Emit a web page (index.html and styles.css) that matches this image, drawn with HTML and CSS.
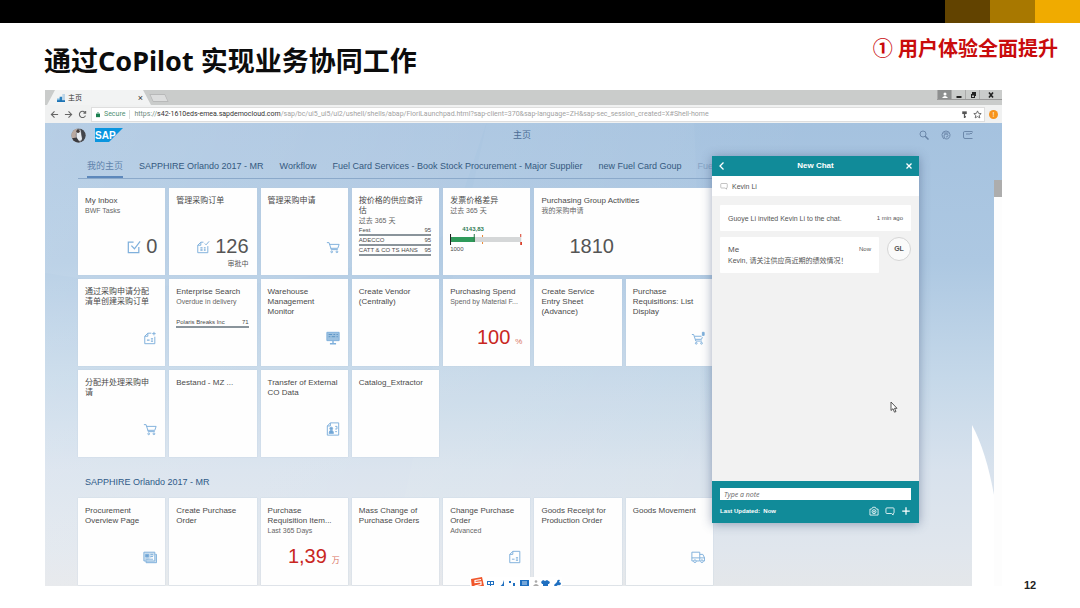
FILE: index.html
```html
<!DOCTYPE html>
<html lang="zh-CN">
<head>
<meta charset="utf-8">
<title>通过CoPilot 实现业务协同工作</title>
<link rel="stylesheet" href="styles.css">
</head>
<body>
<svg class="defs" aria-hidden="true">
  <symbol id="cart" viewBox="0 0 16 16"><path d="M1 3h2.500l2.500 8h7.500M4 5h11l-1.500 4.500H5.500"/><circle cx="6.500" cy="13.500" r="1"/><circle cx="12.500" cy="13.500" r="1"/></symbol>
  <symbol id="doc" viewBox="0 0 16 16"><path d="M5.500 2.500h3M5.500 2.500L2 6v8.500h11.500V7M5.500 2.500V6H2M10 4l1.500 1.500L15 1.500"/><path d="M5 9h2.500M5 11.500h2.500M9 9h2M9 11.500h2" stroke-width="1.600"/></symbol>
  <symbol id="docplus" viewBox="0 0 16 16"><path d="M5.500 2.500h4M5.500 2.500L2 6v8.500h11.500V6.500M5.500 2.500V6H2M12.500 1v4M10.500 3h4"/><path d="M4.500 10.500h3M9 9h2.500M9 11.500h2.500" stroke-width="1.500"/></symbol>
  <symbol id="docsum" viewBox="0 0 16 16"><path d="M5.500 1.500h8v13H2V5zM5.500 1.500V5H2M4.500 10.500h3"/><path d="M9 9h2.500M9 11.500h2.500" stroke-width="1.500"/></symbol>
  <symbol id="bubble" viewBox="0 0 16 16"><path d="M3 3h10q1.500 0 1.500 1.500v6q0 1.500-1.500 1.500v2.500L10.500 12H3q-1.500 0-1.500-1.500v-6Q1.500 3 3 3z"/></symbol>
</svg>

<div class="slide">
  <div class="brandbar"><i class="b1"></i><i class="b2"></i><i class="b3"></i></div>
  <header class="heading">
    <h1>通过CoPilot 实现业务协同工作</h1>
    <p>① 用户体验全面提升</p>
  </header>

  <div class="stage">
    <main class="browser">
      <div class="tabstrip">
        <div class="tab">
          <svg class="favicon" viewBox="0 0 9 9"><path d="M0 5h4v4H0z" fill="#78b7e0"/><path d="M3 3h3v6H3z" fill="#2b7fbd"/><path d="M6 0h3v9H6z" fill="#bcd5e8"/><path d="M0 7h9v2H0z" fill="#1c73b5"/></svg>
          <span>主页</span>
          <button aria-label="关闭标签页">×</button>
        </div>
        <button class="newtab" aria-label="新标签页"></button>
        <div class="winbtns">
          <button class="user" aria-label="用户"><svg viewBox="0 0 10 8"><circle cx="5" cy="3" r="1.500" fill="#fff"/><path d="M2 7q3-4 6 0z" fill="#fff"/></svg></button>
          <button aria-label="最小化"><svg viewBox="0 0 10 8"><path d="M2.500 5h5v2h-5z"/></svg></button>
          <button aria-label="还原"><svg viewBox="0 0 10 8"><path d="M4 1h4v4H7v2H3V3h1z"/><path d="M4 4.500h2v1.500H4z" fill="#ccc"/></svg></button>
          <button class="wide" aria-label="关闭"><svg viewBox="0 0 10 8"><path d="M3 1.500l4 5M7 1.500l-4 5" stroke="#222" stroke-width="1.600"/></svg></button>
        </div>
      </div>
      <div class="toolbar">
        <button aria-label="后退"><svg viewBox="0 0 10 10"><path d="M9 5H2M5 1.500L1.500 5 5 8.500"/></svg></button>
        <button aria-label="前进"><svg viewBox="0 0 10 10"><path d="M1 5h7M5 1.500L8.500 5 5 8.500"/></svg></button>
        <button aria-label="刷新"><svg viewBox="0 0 10 10"><path d="M8.300 6.200a3.500 3.500 0 1 1-.6-3.600M8.500 1v2.500H6"/></svg></button>
        <div class="address">
          <svg class="lock" viewBox="0 0 6 8"><path d="M0 3h6v5H0z" fill="#1b8050"/><path d="M1.500 3.500V2q1.500-2 3 0v1.500" fill="none" stroke="#1b8050"/></svg>
          <span class="secure">Secure</span>
          <span class="url"><span class="scheme">https://</span><b>s42-1610eds-emea.sapdemocloud.com</b>/sap/bc/ui5_ui5/ui2/ushell/shells/abap/FioriLaunchpad.html?sap-client=370&amp;sap-language=ZH&amp;sap-sec_session_created=X#Shell-home</span>
          <svg class="aicon" viewBox="0 0 10 10"><path d="M2.500 1.500h5v3h-5z" fill="#555"/><path d="M5 4v5M5 7.500h1.500" stroke="#555" stroke-width="1.400"/></svg>
          <svg class="aicon" viewBox="0 0 10 10"><path d="M5 1l1.200 2.700 2.900.3-2.200 1.900.7 2.900L5 7.300 2.400 8.800l.7-2.900L.9 4l2.900-.3z" fill="none" stroke="#555" stroke-width=".9"/></svg>
        </div>
        <span class="ext">!</span>
      </div>

      <div class="launchpad">
        <svg class="rays" viewBox="0 0 958 463" preserveAspectRatio="none" aria-hidden="true"><path d="M0 0H442L405 110Q230 190 0 150z" fill="#fff" opacity=".05"/><path d="M442 0H650L668 463H340z" fill="#fff" opacity=".04"/></svg>
        <div class="shellbar">
          <div class="brand">
            <svg class="avatar" viewBox="0 0 16 16"><defs><clipPath id="av"><circle cx="8" cy="8" r="7.500"/></clipPath></defs><g clip-path="url(#av)"><path d="M0 0h16v16H0z" fill="#77777b"/><path d="M0 0h7L5 7l1 9H0z" fill="#b9a9a1"/><path d="M6 3l4-1 1 6 1 5-6 1z" fill="#e6eaf0"/><path d="M10 0h6v16h-6l2-5-1-6z" fill="#43464c"/><path d="M1 11l5-1 4 6H2z" fill="#3b3b40"/><circle cx="7.500" cy="3.500" r="1.800" fill="#463c39"/></g></svg>
            <svg class="sap" viewBox="0 0 28 14"><path d="M0 0h28L14 14H0z" fill="#0a95df"/><text x="0" y="11" font-size="10" font-weight="700" fill="#fff">SAP</text></svg>
          </div>
          <h2>主页</h2>
          <div class="actions">
            <button aria-label="搜索"><svg viewBox="0 0 10 10"><circle cx="4" cy="4" r="3"/><path d="M6.200 6.200L9.500 9.500" stroke-width="1.500"/></svg></button>
            <button aria-label="CoPilot"><svg viewBox="0 0 10 10"><path d="M3 9Q1 7 1 4.500 1.500 1 5 1q3.500 0 4 3.500Q9 9 5 9q-2 0-2-3 0-2 2-2t2 1.500T5 7M2.500 3h5"/></svg></button>
            <button aria-label="通知"><svg viewBox="0 0 10 10"><path d="M9.500 1.500H1.500Q.500 1.500.500 3v4q0 1.500 1.500 1.500h7.500M3 4h4M7 3l1 1 1.500-1.500"/></svg></button>
          </div>
        </div>

        <div class="page">
          <nav class="anchors">
            <a class="current" href="#home">我的主页</a><a href="#sapphire">SAPPHIRE Orlando 2017 - MR</a><a href="#g3">Workflow</a><a href="#g4">Fuel Card Services - Book Stock Procurement - Major Supplier</a><a href="#g5">new Fuel Card Goup</a><a class="faded" href="#g6">Fue</a>
          </nav>

          <section class="tiles" id="home">
            <a class="tile" href="#t"><h3>My Inbox</h3><p>BWF Tasks</p><div class="value"><svg class="icon" viewBox="0 0 16 16"><path d="M13.500 8v6.500H1.500V2.500h6M5 6.500L8.500 10 15 1.500" stroke-width="1.400"/></svg><b>0</b></div></a>
            <a class="tile" href="#t"><h3>管理采购订单</h3><div class="value"><svg class="icon"><use href="#doc"/></svg><b>126</b></div><small>审批中</small></a>
            <a class="tile" href="#t"><h3>管理采购申请</h3><div class="value"><svg class="icon"><use href="#cart"/></svg></div></a>
            <a class="tile" href="#t"><h3>按价格的供应商评估</h3><p>过去 365 天</p>
              <ul class="bars"><li><span>Fest</span><span>95</span></li><li><span>ADECCO</span><span>95</span></li><li><span>CATT &amp; CO TS HANS</span><span>95</span></li></ul></a>
            <a class="tile" href="#t"><h3>发票价格差异</h3><p>过去 365 天</p>
              <div class="bullet"><span class="actual">4143,83</span><svg viewBox="0 0 70 13" preserveAspectRatio="none"><path d="M1 4h68v5H1z" fill="#d5d7d8"/><path d="M1 4h23v5H1z" fill="#2f9a5a"/><path d="M23 1h1v8h-1z" fill="#2f7a4a"/><path d="M0 1h1v11H0z" fill="#222"/><path d="M31 2h1v2h-1zM31 9h1v2h-1z" fill="#e98b3a"/><path d="M68 1h1v3h-1zM68 9h2v3h-2z" fill="#d9402b"/></svg><span>1000</span></div></a>
            <a class="tile double" href="#t"><h3>Purchasing Group Activities</h3><p>我的采购申请</p><div class="value"><b>1810</b></div></a>

            <a class="tile" href="#t"><h3>通过采购申请分配清单创建采购订单</h3><div class="value"><svg class="icon"><use href="#docplus"/></svg></div></a>
            <a class="tile" href="#t"><h3>Enterprise Search</h3><p>Overdue in delivery</p><ul class="bars single"><li><span>Polaris Breaks Inc</span><span>71</span></li></ul></a>
            <a class="tile" href="#t"><h3>Warehouse Management Monitor</h3><div class="value"><svg class="icon" viewBox="0 0 16 16"><path d="M1 1.500h14v9.500H1z" fill="#9dc1e0"/><path d="M3 4h4M8.500 4h2M12 4h1.500M3 6.500h2M6.500 6.500h4M12 6.500h1.500" stroke="#5c94c4"/><path d="M8 11v3.500M4.500 14.500h7" stroke-width="1.600"/></svg></div></a>
            <a class="tile" href="#t"><h3>Create Vendor (Centrally)</h3></a>
            <a class="tile" href="#t"><h3>Purchasing Spend</h3><p>Spend by Material F...</p><div class="value bad"><b>100</b><i>%</i></div></a>
            <a class="tile" href="#t"><h3>Create Service Entry Sheet (Advance)</h3></a>
            <a class="tile" href="#t"><h3>Purchase Requisitions: List Display</h3><div class="value"><svg class="icon" viewBox="0 0 16 16"><path d="M1 4h2l2.500 7.500h7M4 6h8M13 7l-1 2.500H5"/><circle cx="6" cy="14" r="1"/><circle cx="12" cy="14" r="1"/><path d="M13 1.500h2v3.500h-2z" fill="#7fb0dc"/></svg></div></a>

            <a class="tile" href="#t"><h3>分配并处理采购申请</h3><div class="value"><svg class="icon"><use href="#cart"/></svg></div></a>
            <a class="tile" href="#t"><h3>Bestand - MZ ...</h3></a>
            <a class="tile" href="#t"><h3>Transfer of External CO Data</h3><div class="value"><svg class="icon" viewBox="0 0 16 16"><path d="M5 1h9.500v14H1.500V4.500zM5 1v3.500H1.500M10.500 5h2v3h-2M10.500 11h2"/><circle cx="6" cy="7.500" r="1.600" fill="#6fa4d4"/><path d="M3.500 13q0-3.500 2.500-3.500T8.500 13z" fill="#6fa4d4"/></svg></div></a>
            <a class="tile" href="#t"><h3>Catalog_Extractor</h3></a>
          </section>

          <h2 class="group">SAPPHIRE Orlando 2017 - MR</h2>
          <section class="tiles" id="sapphire">
            <a class="tile" href="#t"><h3>Procurement Overview Page</h3><div class="value"><svg class="icon" viewBox="0 0 16 16"><path d="M3.500 12.500V14.500h12V5H14M1 2.500h12.500v10H1z" fill="#cfe1f0"/><path d="M3 5h3.500v3H3z" fill="#6fa4d4"/><path d="M8.500 5h3M8.500 7.500h3M3 10.500h8.500"/></svg></div></a>
            <a class="tile" href="#t"><h3>Create Purchase Order</h3></a>
            <a class="tile" href="#t"><h3>Purchase Requisition Item...</h3><p>Last 365 Days</p><div class="value bad"><b>1,39</b><i>万</i></div></a>
            <a class="tile" href="#t"><h3>Mass Change of Purchase Orders</h3></a>
            <a class="tile" href="#t"><h3>Change Purchase Order</h3><p>Advanced</p><div class="value"><svg class="icon"><use href="#docsum"/></svg></div></a>
            <a class="tile" href="#t"><h3>Goods Receipt for Production Order</h3></a>
            <a class="tile" href="#t"><h3>Goods Movement</h3><div class="value"><svg class="icon" viewBox="0 0 16 16"><path d="M3 12.500H1V2.500h9v10H6M10 5h3.500l2 4v3.500H14M10 9h5.500M1 9h9"/><circle cx="4.500" cy="12.800" r="1.500"/><circle cx="12.500" cy="12.800" r="1.500"/></svg></div></a>
          </section>
        </div>

        <div class="scrollbar"><i></i></div>
        <svg class="curve" viewBox="0 0 22 161" preserveAspectRatio="none" aria-hidden="true"><path d="M0 0Q14 26 22 70V161H0z" fill="#fff"/></svg>

        <div class="ime">
          <svg viewBox="0 0 92 10"><path d="M1 2L12 0l2 9-12 2z" fill="#f0562b"/><path d="M11 2.500L5 3.500v2l6-.5v2.500L4.500 9" fill="none" stroke="#fff" stroke-width="1.200"/><g fill="#1f6fc0"><path d="M17 4h7v4h-3v2h-1V8h-3zm1 1v2h2V5zm3 0v2h2V5z" fill-rule="evenodd"/><path d="M34 3v7h-6q5-1 6-7z"/><path d="M39 4h2v2h-2zM43 6h2v3h-2z"/><path d="M50 3h9v6h-9z"/><path d="M73 3l2 1 2-1 3 2-1 2h-1v3h-5V7h-1l-1-2z"/><path d="M84 8l3-3q0-3 3-2l-1 2 2 1q0 3-3 2l-3 2z"/></g><path d="M52 5h5M52 7h5" stroke="#cfe0f0"/><circle cx="66" cy="4.500" r="1.300" fill="#aaa"/><path d="M63 9q3-4 6 0z" fill="#aaa"/></svg>
        </div>

        <aside class="chat">
          <header><button aria-label="返回"><svg viewBox="0 0 8 8"><path d="M5.500.500L2 4l3.500 3.500"/></svg></button><h2>New Chat</h2><button aria-label="关闭"><svg viewBox="0 0 8 8"><path d="M1.500 1.500l5 5M6.500 1.500l-5 5"/></svg></button></header>
          <div class="who"><svg><use href="#bubble"/></svg>Kevin Li</div>
          <div class="log">
            <div class="msg"><span>Guoye Li invited Kevin Li to the chat.</span><time>1 min ago</time></div>
            <div class="own">
              <div class="msg stack"><div class="top"><strong>Me</strong><time>Now</time></div><p>Kevin, 请关注供应商近期的绩效情况！</p></div>
              <span class="badge">GL</span>
            </div>
          </div>
          <footer>
            <input type="text" placeholder="Type a note" aria-label="Type a note">
            <div class="status"><span>Last Updated:&nbsp; Now</span>
              <button aria-label="截图"><svg viewBox="0 0 16 16"><path d="M1.500 5h2.500l2-3h4l2 3h2.500v9.500h-13z"/><circle cx="8" cy="9" r="3.200"/><circle cx="8" cy="9" r="1"/></svg></button>
              <button aria-label="消息"><svg><use href="#bubble"/></svg></button>
              <button aria-label="添加"><svg viewBox="0 0 16 16"><path d="M8 2v12M2 8h12" stroke-width="2"/></svg></button>
            </div>
          </footer>
        </aside>
        <svg class="cursor" viewBox="0 0 8 12" aria-hidden="true"><path d="M1 1v8.500l2-1.800 1.500 3.500 1.500-.7-1.500-3.200H7z" fill="#fff" stroke="#444" stroke-width=".9"/></svg>
      </div>
    </main>
    <div class="pageno">12</div>
  </div>
</div>
</body>
</html>
```
FILE: styles.css
```css
* { box-sizing: border-box; margin: 0; padding: 0; }
body { background: #fff; font-family: "Liberation Sans", "Noto Sans CJK SC", sans-serif; }
button { border: 0; background: none; font: inherit; color: inherit; display: flex; align-items: center; justify-content: center; }
a { color: inherit; text-decoration: none; }
ul { list-style: none; }
svg { display: block; flex: none; }
.defs { position: absolute; width: 0; height: 0; }

.slide { min-height: 100vh; display: flex; flex-direction: column; }
.brandbar { height: 23px; background: #000; display: flex; justify-content: flex-end; }
.brandbar i { width: 45px; }
.b1 { background: #624300; }
.b2 { background: #a87800; }
.b3 { background: #f0ab00; }
.heading { height: 67px; padding: 0 22px 0 44px; display: flex; justify-content: space-between; font-family: "Noto Sans", "Noto Sans CJK SC", sans-serif; }
.heading h1 { font-size: 27px; line-height: 40px; padding-top: 18px; color: #0c0c0c; }
.heading p { font-size: 20px; line-height: 30px; padding-top: 11px; font-weight: 700; color: #c90c0c; }

.stage { flex: 1; display: flex; padding-left: 45px; }
.browser { flex: 1; align-self: flex-start; min-width: 0; }
.pageno { width: 78px; align-self: flex-end; padding: 0 0 16px 22px; font-size: 11px; line-height: 14px; font-weight: 700; color: #222; }

.tabstrip { height: 15px; background: #cacccb; display: flex; padding-left: 2px; }
.tab { width: 104px; background: #f2f3f3; clip-path: polygon(8px 0, 96px 0, 100% 100%, 0 100%); display: flex; align-items: center; gap: 3px; padding: 0 8px 0 10px; font-size: 7px; color: #333; }
.tab span { flex: 1; line-height: 10px; }
.tab button { font-size: 9px; line-height: 10px; }
.favicon { width: 8px; height: 8px; }
.newtab { width: 16px; height: 8px; margin-top: 4px; background: #dcdddd; border: 1px solid #b8b9b9; transform: skewX(25deg); }
.winbtns { margin-left: auto; height: 10px; display: flex; border-bottom: 1px solid #999; }
.winbtns button { width: 14px; border-left: 1px solid #aaa; }
.winbtns .wide { width: 23px; }
.winbtns .user { background: #8d8f8f; }
.winbtns svg { width: 10px; height: 8px; fill: #222; }

.toolbar { height: 18px; background: #f0f1f1; display: flex; align-items: center; gap: 4px; padding: 0 4px; }
.toolbar button { width: 10px; height: 10px; }
.toolbar button svg { width: 9px; height: 9px; fill: none; stroke: #666; stroke-width: 1.2; }
.address { flex: 1; min-width: 0; height: 15px; background: #fff; border: 1px solid #dedede; display: flex; align-items: center; gap: 4px; padding: 0 2px 0 4px; font-family: Roboto, sans-serif; font-size: 7px; line-height: 12px; white-space: nowrap; }
.lock { width: 4px; height: 7px; }
.secure { color: #4d8f72; padding-right: 4px; border-right: 1px solid #ddd; line-height: 9px; }
.url { flex: 1; overflow: hidden; color: #a2a2a2; }
.url b { font-weight: 400; color: #333; }
.url .scheme { color: #6f8a7d; }
.aicon { width: 9px; height: 9px; }
.ext { width: 9px; height: 9px; border-radius: 50%; background: #f7941d; color: #fff; font-size: 7px; line-height: 9px; text-align: center; }

.launchpad { position: relative; overflow: hidden; background: linear-gradient(100deg, rgba(255,255,255,.16), rgba(255,255,255,0) 75%), linear-gradient(#a5c2df, #adc8e2 30%, #c5d8e9 55%, #d8e2ed 75%, #e0e6ed 92%, #e4e7ea); }
.rays { position: absolute; inset: 0; width: 100%; height: 100%; }
.shellbar { position: relative; height: 24px; display: grid; grid-template-columns: 1fr auto 1fr; align-items: center; padding: 0 29px 0 26px; }
.shellbar h2 { font-size: 9px; line-height: 12px; font-weight: 400; color: #4c6c94; }
.brand { display: flex; align-items: center; gap: 9px; }
.avatar { width: 15px; height: 15px; }
.sap { width: 28px; height: 14px; }
.actions { display: flex; gap: 12px; justify-content: flex-end; }
.actions svg { width: 10px; height: 10px; fill: none; stroke: #6682a5; stroke-width: .9; }

.page { position: relative; padding: 0 289px 0 33px; }
.anchors { height: 32px; margin-bottom: 9px; padding-left: 9px; display: flex; gap: 16px; border-bottom: 1px solid #8ba9ca; font-size: 9px; line-height: 12px; white-space: nowrap; color: #34597f; }
.anchors a { flex: none; padding: 13px 0 5px; }
.anchors .current { color: #5f82ab; border-bottom: 2px solid #5d88bb; }
.anchors .faded { color: #86a3c4; }

.tiles { display: grid; grid-template-columns: repeat(7, minmax(0, 1fr)); grid-auto-rows: minmax(87px, auto); gap: 4px; }
.tile { background: #fefefe; padding: 8px 8px 0 7px; display: flex; flex-direction: column; color: #4a4a4a; box-shadow: 0 0 1px #b9c8d8; }
.tile h3 { font-size: 8px; line-height: 10px; font-weight: 400; padding-right: 1px; }
.tile p { font-size: 7px; line-height: 10px; color: #666; white-space: nowrap; }
.tile small { font-size: 7px; line-height: 10px; text-align: right; margin: -16px 0 6px; color: #555; }
.double { grid-column: span 2; }
.double .value { justify-content: flex-start; padding-left: 28px; }
.value { margin: auto 0 16px; height: 24px; display: flex; align-items: center; justify-content: flex-end; gap: 5px; }
.value b { font-size: 20px; line-height: 22px; padding-bottom: 2px; font-weight: 400; color: #555; }
.value i { font-size: 8px; line-height: 10px; font-style: normal; padding-top: 8px; color: #d9705f; }
.bad b { color: #c9271e; }
.icon { width: 14px; height: 14px; fill: none; stroke: #7fb0dc; stroke-width: 1.1; }
.bars li { display: flex; justify-content: space-between; font-size: 6px; line-height: 8px; border-bottom: 2px solid #8a949b; height: 10px; white-space: nowrap; }
.single { margin-top: 11px; }
.bullet { display: flex; flex-direction: column; font-size: 6px; line-height: 7px; margin-top: 10px; }
.bullet .actual { padding-left: 12px; font-weight: 700; color: #2d7a54; }
.bullet svg { width: 100%; height: 13px; }
.group { font-size: 9px; line-height: 12px; font-weight: 400; color: #2e5a88; padding: 19px 7px 10px; }
#sapphire { margin-bottom: 1px; }

.scrollbar { position: absolute; top: 57px; right: 0; bottom: 0; width: 8px; background: #fdfdfd; }
.scrollbar i { display: block; height: 17px; background: #adadad; }
.curve { position: absolute; right: 8px; bottom: 0; width: 22px; height: 161px; }
.ime { position: absolute; left: 425px; bottom: 0; height: 9px; background: #fff; overflow: hidden; }
.ime svg { width: 92px; height: 10px; }

.chat { position: absolute; top: 33px; right: 83px; width: 207px; height: 367px; display: flex; flex-direction: column; background: #f2f2f2; box-shadow: 0 1px 10px rgba(50,70,110,.45); color: #555; }
.chat header { height: 20px; background: #118b99; color: #fff; display: flex; align-items: center; justify-content: space-between; padding: 0 6px; }
.chat header h2 { font-size: 8px; line-height: 10px; }
.chat header svg { width: 8px; height: 8px; fill: none; stroke: #fff; stroke-width: 1.3; }
.who { height: 20px; background: #fff; display: flex; align-items: center; gap: 4px; padding: 0 8px; font-size: 7px; }
.who svg { width: 8px; height: 8px; fill: none; stroke: #888; }
.log { flex: 1; padding: 9px 8px; display: flex; flex-direction: column; gap: 6px; }
.msg { background: #fff; min-height: 26px; padding: 0 8px; display: flex; align-items: center; justify-content: space-between; font-size: 7px; border-radius: 1px; }
.msg time { font-size: 6px; }
.own { display: flex; justify-content: space-between; align-items: flex-start; }
.stack { width: 159px; height: 36px; flex-direction: column; align-items: stretch; justify-content: center; line-height: 11px; }
.stack .top { display: flex; justify-content: space-between; align-items: center; }
.stack strong { font-size: 8px; font-weight: 400; }
.stack p { font-size: 7px; white-space: nowrap; }
.badge { width: 24px; height: 24px; border-radius: 50%; background: #fafafa; border: 1px solid #d5d5d5; font-size: 7px; line-height: 22px; font-weight: 700; text-align: center; }
.chat footer { height: 42px; background: #118b99; padding: 7px 8px 0; color: #fff; }
.chat input { display: block; width: 100%; height: 12px; border: 0; border-radius: 0; padding: 0 4px; background: #fff; font: italic 7px "Open Sans", sans-serif; }
.chat input::placeholder { color: #666; }
.status { display: flex; align-items: center; gap: 6px; padding-top: 6px; font-size: 6px; font-weight: 700; line-height: 10px; }
.status span { flex: 1; }
.status svg { width: 10px; height: 10px; fill: none; stroke: #fff; stroke-width: 1.3; }
.cursor { position: absolute; right: 104px; top: 278px; width: 8px; height: 12px; }
```
